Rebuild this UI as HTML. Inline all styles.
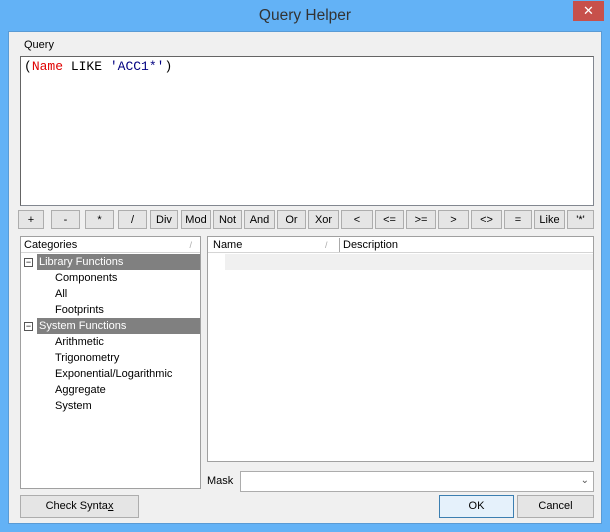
<!DOCTYPE html><html><head><style>
*{box-sizing:border-box;margin:0;padding:0}
body{width:610px;height:532px;background:#63b2f6;font-family:"Liberation Sans",sans-serif;font-size:11px;color:#000;position:relative;overflow:hidden}
.a{position:absolute}
.client{left:8px;top:31px;width:594px;height:493px;background:#f0f0f0;border:1px solid #5a9bd5}
.btn{position:absolute;top:210px;height:19px;background:#e5e5e5;border:1px solid #adadad;text-align:center;line-height:18px;font-size:11px}
.row{position:absolute;left:0;height:16px;line-height:16px;font-size:11px}
</style></head><body>
<div class="a" style="left:0;top:0;width:610px;height:31px;text-align:center;line-height:32px;font-size:15.5px;color:#333">Query Helper</div>
<div class="a" style="left:573px;top:1px;width:31px;height:20px;background:#c7504b;color:#fff;text-align:center;line-height:19px;font-size:13px">✕</div>
<div class="a client"></div>
<div class="a" style="left:24px;top:39px">Query</div>
<div class="a" style="left:20px;top:56px;width:574px;height:150px;background:#fff;border:1px solid #828790;border-top-color:#646464;border-left-color:#646464"></div>
<div class="a" style="left:24px;top:59px;font-family:'Liberation Mono',monospace;font-size:13px;color:#000">(<span style="color:#e00000">Name</span> LIKE <span style="color:#000080">'ACC1*'</span>)</div>
<div class="btn" style="left:18px;width:26px">+</div>
<div class="btn" style="left:51px;width:29px">-</div>
<div class="btn" style="left:85px;width:29px">*</div>
<div class="btn" style="left:118px;width:29px">/</div>
<div class="btn" style="left:150px;width:28px">Div</div>
<div class="btn" style="left:181px;width:30px">Mod</div>
<div class="btn" style="left:213px;width:29px">Not</div>
<div class="btn" style="left:244px;width:31px">And</div>
<div class="btn" style="left:277px;width:29px">Or</div>
<div class="btn" style="left:308px;width:31px">Xor</div>
<div class="btn" style="left:341px;width:32px">&lt;</div>
<div class="btn" style="left:375px;width:29px">&lt;=</div>
<div class="btn" style="left:406px;width:30px">&gt;=</div>
<div class="btn" style="left:438px;width:31px">&gt;</div>
<div class="btn" style="left:471px;width:31px">&lt;&gt;</div>
<div class="btn" style="left:504px;width:28px">=</div>
<div class="btn" style="left:534px;width:31px">Like</div>
<div class="btn" style="left:567px;width:27px">'*'</div>
<div class="a" style="left:20px;top:236px;width:181px;height:253px;background:#fff;border:1px solid #a0a0a0">
 <div class="row" style="top:0;width:179px;height:16px;border-bottom:1px solid #d5d5d5;padding-left:3px">Categories<span style="position:absolute;right:8px;color:#aaa;font-size:9px">/</span></div>
 <div class="row" style="top:17px;left:3px;width:9px;height:9px;margin-top:4px;border:1px solid #555;line-height:6px;text-align:center;font-size:9px">−</div>
 <div class="row" style="top:17px;left:16px;width:163px;background:#808080;color:#fff;padding-left:2px">Library Functions</div>
 <div class="row" style="top:33px;left:34px">Components</div>
 <div class="row" style="top:49px;left:34px">All</div>
 <div class="row" style="top:65px;left:34px">Footprints</div>
 <div class="row" style="top:81px;left:3px;width:9px;height:9px;margin-top:4px;border:1px solid #555;line-height:6px;text-align:center;font-size:9px">−</div>
 <div class="row" style="top:81px;left:16px;width:163px;background:#808080;color:#fff;padding-left:2px">System Functions</div>
 <div class="row" style="top:97px;left:34px">Arithmetic</div>
 <div class="row" style="top:113px;left:34px">Trigonometry</div>
 <div class="row" style="top:129px;left:34px">Exponential/Logarithmic</div>
 <div class="row" style="top:145px;left:34px">Aggregate</div>
 <div class="row" style="top:161px;left:34px">System</div>
</div>
<div class="a" style="left:207px;top:236px;width:387px;height:226px;background:#fff;border:1px solid #a0a0a0">
 <div class="row" style="top:0;width:385px;border-bottom:1px solid #d5d5d5;padding-left:5px">Name<span style="position:absolute;left:117px;color:#aaa;font-size:9px">/</span></div>
 <div class="a" style="left:131px;top:1px;width:1px;height:14px;background:#aaa"></div>
 <div class="row" style="top:0;left:135px">Description</div>
 <div class="a" style="left:17px;top:17px;width:368px;height:16px;background:#f0f0f0"></div>
</div>
<div class="a" style="left:207px;top:475px">Mask</div>
<div class="a" style="left:240px;top:471px;width:354px;height:21px;background:#fff;border:1px solid #acacac"><span style="position:absolute;right:4px;top:3px;font-size:10px;color:#555">⌄</span></div>
<div class="a" style="left:20px;top:495px;width:119px;height:23px;background:#e5e5e5;border:1px solid #adadad;text-align:center;line-height:21px">Check Synta<u>x</u></div>
<div class="a" style="left:439px;top:495px;width:75px;height:23px;background:#e5f1fb;border:1px solid #3c7fb1;text-align:center;line-height:21px">OK</div>
<div class="a" style="left:517px;top:495px;width:77px;height:23px;background:#e5e5e5;border:1px solid #adadad;text-align:center;line-height:21px">Cancel</div>
</body></html>
